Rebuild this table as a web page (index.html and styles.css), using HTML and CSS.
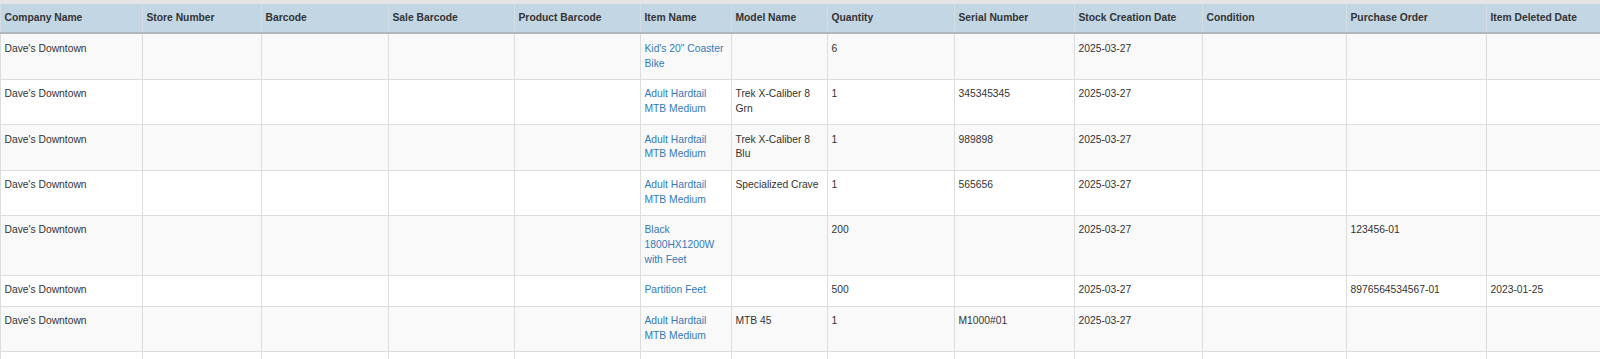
FILE: index.html
```html
<!DOCTYPE html>
<html>
<head>
<meta charset="utf-8">
<link rel="stylesheet" href="styles.css">
</head>
<body>
<div class="wrap">
<table class="grid">
<colgroup>
<col class="c1"><col class="c2"><col class="c3"><col class="c4"><col class="c5"><col class="c6"><col class="c7"><col class="c8"><col class="c9"><col class="c10"><col class="c11"><col class="c12"><col class="c13">
</colgroup>
<thead>
<tr><th>Company Name</th><th>Store Number</th><th>Barcode</th><th>Sale Barcode</th><th>Product Barcode</th><th>Item Name</th><th>Model Name</th><th>Quantity</th><th>Serial Number</th><th>Stock Creation Date</th><th>Condition</th><th>Purchase Order</th><th>Item Deleted Date</th></tr>
</thead>
<tbody>
<tr><td>Dave's Downtown</td><td></td><td></td><td></td><td></td><td><a href="#">Kid's 20" Coaster Bike</a></td><td></td><td>6</td><td></td><td>2025-03-27</td><td></td><td></td><td></td></tr>
<tr><td>Dave's Downtown</td><td></td><td></td><td></td><td></td><td><a href="#">Adult Hardtail MTB Medium</a></td><td>Trek X-Caliber 8 Grn</td><td>1</td><td>345345345</td><td>2025-03-27</td><td></td><td></td><td></td></tr>
<tr><td>Dave's Downtown</td><td></td><td></td><td></td><td></td><td><a href="#">Adult Hardtail MTB Medium</a></td><td>Trek X-Caliber 8 Blu</td><td>1</td><td>989898</td><td>2025-03-27</td><td></td><td></td><td></td></tr>
<tr><td>Dave's Downtown</td><td></td><td></td><td></td><td></td><td><a href="#">Adult Hardtail MTB Medium</a></td><td>Specialized Crave</td><td>1</td><td>565656</td><td>2025-03-27</td><td></td><td></td><td></td></tr>
<tr><td>Dave's Downtown</td><td></td><td></td><td></td><td></td><td><a href="#">Black 1800HX1200W with Feet</a></td><td></td><td>200</td><td></td><td>2025-03-27</td><td></td><td>123456-01</td><td></td></tr>
<tr><td>Dave's Downtown</td><td></td><td></td><td></td><td></td><td><a href="#">Partition Feet</a></td><td></td><td>500</td><td></td><td>2025-03-27</td><td></td><td>8976564534567-01</td><td>2023-01-25</td></tr>
<tr><td>Dave's Downtown</td><td></td><td></td><td></td><td></td><td><a href="#">Adult Hardtail MTB Medium</a></td><td>MTB 45</td><td>1</td><td>M1000#01</td><td>2025-03-27</td><td></td><td></td><td></td></tr>
<tr class="tail"><td></td><td></td><td></td><td></td><td></td><td></td><td></td><td></td><td></td><td></td><td></td><td></td><td></td></tr>
</tbody>
</table>
</div>
</body>
</html>
```
FILE: styles.css
```css
html, body {
  margin: 0;
  padding: 0;
  background: #ffffff;
}
body {
  font-family: "Liberation Sans", Arial, sans-serif;
  font-size: 10.3px;
  line-height: 14.6px;
  color: #333333;
  overflow: hidden;
}
.wrap {
  border-top: 4px solid #e4e4e4;
}
.grid {
  width: 1600px;
  table-layout: fixed;
  border-collapse: collapse;
}
.c1 { width: 142px; }
.c2 { width: 119px; }
.c3 { width: 127px; }
.c4 { width: 126px; }
.c5 { width: 126px; }
.c6 { width: 91px; }
.c7 { width: 96px; }
.c8 { width: 127px; }
.c9 { width: 120px; }
.c10 { width: 128px; }
.c11 { width: 144px; }
.c12 { width: 140px; }
.c13 { width: 114px; }
.grid th,
.grid td {
  padding: 7.6px 3.5px 7.6px 3.5px;
  text-align: left;
  vertical-align: top;
  border: 1px solid #dddddd;
}
.grid th {
  font-weight: bold;
  background: #c3d6e4;
  border-top: none;
  border-bottom: 2px solid #b0b8bf;
  border-left: 1px solid #d5dde4;
  border-right: 1px solid #d5dde4;
  padding-top: 7.2px;
  padding-bottom: 6.6px;
}
.grid tbody tr:nth-child(odd) td {
  background: #f9f9f9;
}
.grid tbody tr:nth-child(even) td {
  background: #ffffff;
}
.grid .tail td {
  height: 30px;
}
.grid a {
  color: #337ab7;
  text-decoration: none;
}
```
